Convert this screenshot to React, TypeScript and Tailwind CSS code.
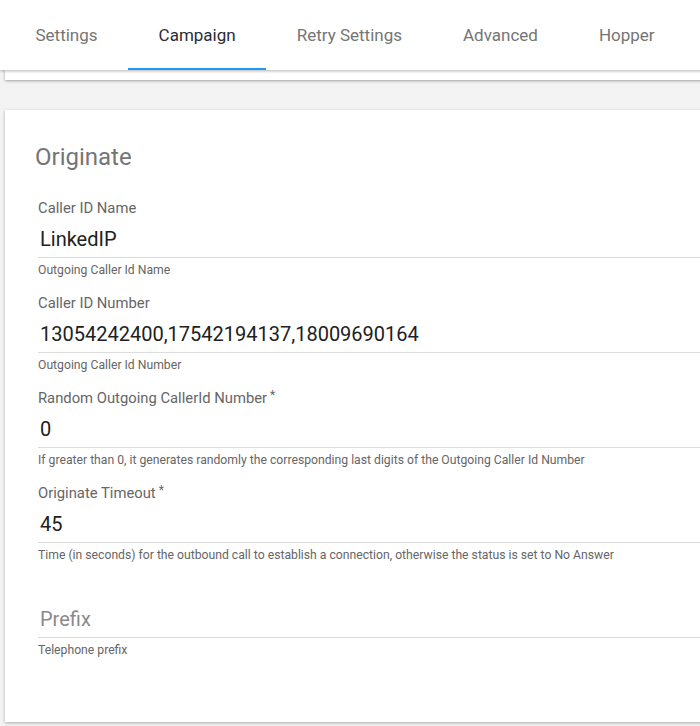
import React from 'react'

const tabs = ['Settings', 'Campaign', 'Retry Settings', 'Advanced', 'Hopper']

type FieldProps = {
  label?: string
  value?: string
  placeholder?: string
  hint: string
  required?: boolean
}

function Field({ label, value, placeholder, hint, required }: FieldProps) {
  return (
    <div className="mb-[15px]">
      <div className="h-[20px] text-[14.8px] leading-[20px] text-[#666]">
        {label}
        {required && <span className="ml-[3px] align-top text-[12px] leading-[14px]">*</span>}
      </div>
      <div className="flex h-[40px] items-end border-b border-[#dcdcdc] pb-[6px] pl-[2px]">
        {value ? (
          <span className="text-[20px] leading-[24px] text-[#212121]">{value}</span>
        ) : (
          <span className="text-[20px] leading-[24px] text-[#8a8a8a]">{placeholder}</span>
        )}
      </div>
      <div className="mt-[4px] text-[12.2px] leading-[16px] text-[#666]">{hint}</div>
    </div>
  )
}

export default function App() {
  return (
    <div className="h-[726px] w-[700px] overflow-hidden bg-[#f3f3f3] font-['Roboto',sans-serif]">

      {/* Tab bar */}
      <div className="relative z-10 flex h-[70px] w-[760px] bg-white pl-[5px] shadow-[0_1px_3px_rgba(0,0,0,0.3)]">
        {tabs.map((t) => (
          <div
            key={t}
            className={
              t === 'Campaign'
                ? 'flex h-full items-center border-b-2 border-[#2196f3] px-[30.5px] pt-[4px] text-[17px] text-[#2b2b33]'
                : 'flex h-full items-center border-b-2 border-transparent px-[30.5px] pt-[4px] text-[17px] text-[#757575]'
            }
          >
            {t}
          </div>
        ))}
      </div>

      {/* Bottom of the card above, scrolled out */}
      <div className="ml-[5px] h-[10px] w-[760px] bg-white shadow-[0_1px_3px_rgba(0,0,0,0.35)]" />

      {/* Originate card */}
      <div className="ml-[5px] mt-[30px] w-[760px] bg-white pb-[49px] pl-[29px] pt-[33px] shadow-[0_1px_3px_rgba(0,0,0,0.3)]">
        <h2 className="mb-[27px] pl-[1px] text-[24px] leading-[28px] text-[#757575]">Originate</h2>
        <div className="pl-[4px]">
          <Field label="Caller ID Name" value="LinkedIP" hint="Outgoing Caller Id Name" />
          <Field
            label="Caller ID Number"
            value="13054242400,17542194137,18009690164"
            hint="Outgoing Caller Id Number"
          />
          <Field
            label="Random Outgoing CallerId Number"
            required
            value="0"
            hint="If greater than 0, it generates randomly the corresponding last digits of the Outgoing Caller Id Number"
          />
          <Field
            label="Originate Timeout"
            required
            value="45"
            hint="Time (in seconds) for the outbound call to establish a connection, otherwise the status is set to No Answer"
          />
          <Field placeholder="Prefix" hint="Telephone prefix" />
        </div>
      </div>
    </div>
  )
}
